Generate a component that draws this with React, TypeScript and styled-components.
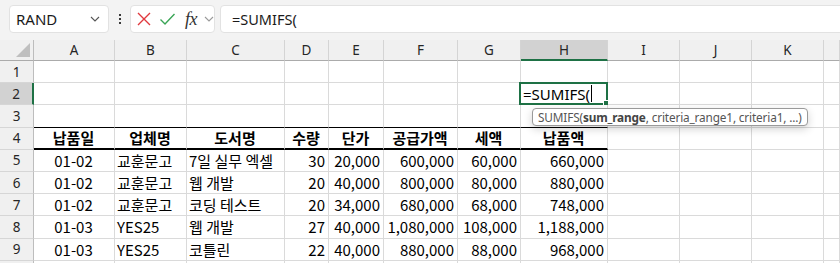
import React from "react";
import styled, { createGlobalStyle } from "styled-components";

const GREEN = "#1e7145";
const GRID = "#dadada";
const HEAD_BG = "#f0f0f0";
const SEL_BG = "#d2d2d2";

const Global = createGlobalStyle`
  html, body { margin: 0; padding: 0; background: #fff; overflow: hidden; }
  * { box-sizing: border-box; }
`;

const Page = styled.div`
  width: 840px;
  height: 263px;
  overflow: hidden;
  background: #fff;
`;

const Toolbar = styled.div`
  display: flex;
  align-items: flex-start;
  height: 40px;
  padding: 5px 0 0 9px;
  background: #f3f3f3;
`;

const Box = styled.div`
  height: 28px;
  background: #fff;
  border: 1px solid #e2e2e2;
  border-radius: 4px;
  display: flex;
  align-items: center;
`;

const NameBox = styled(Box)`
  width: 100px;
  justify-content: space-between;
  padding: 0 8px 0 6px;
  font-family: "Noto Sans", sans-serif;
  font-size: 15px;
  color: #1a1a1a;
`;

const Dots = styled.div`
  width: 21px;
  height: 28px;
  display: flex;
  flex-direction: column;
  align-items: center;
  justify-content: center;
  gap: 2px;
`;

const Dot = styled.span`
  width: 2px;
  height: 2px;
  background: #3a3a3a;
`;

const FxGroup = styled(Box)`
  width: 85px;
  padding-left: 5px;
  gap: 7px;
`;

const Fx = styled.span`
  font-family: "Liberation Serif", serif;
  font-style: italic;
  font-size: 18px;
  color: #333;
  margin-left: 2px;
  letter-spacing: -0.5px;
`;

const FormulaInput = styled(Box)`
  flex: 1;
  margin-left: 5px;
  margin-right: -10px;
  padding-left: 11px;
  font-family: "Noto Sans", sans-serif;
  font-size: 14.5px;
  color: #1a1a1a;
`;

const Sheet = styled.div`
  position: relative;
  display: grid;
  grid-template-columns: 34px 81px 72px 98px 44px 55px 74px 63px 87px 72px 72px 72px 1fr;
  grid-template-rows: 21px repeat(10, 22.2px);
`;

const Corner = styled.div`
  background: ${HEAD_BG};
  border-right: 1px solid #bdbdbd;
  border-bottom: 1px solid #ababab;
  display: flex;
  align-items: flex-end;
  justify-content: flex-end;
  padding: 0 3px 3px 0;
`;

const Triangle = styled.div`
  width: 14px;
  height: 14px;
  background: #bfbfbf;
  clip-path: polygon(100% 0, 100% 100%, 0 100%);
`;

const ColHeader = styled.div<{ $active?: boolean }>`
  background: ${(p) => (p.$active ? SEL_BG : HEAD_BG)};
  border-right: 1px solid #d4d4d4;
  border-bottom: ${(p) => (p.$active ? `2px solid ${GREEN}` : "1px solid #ababab")};
  display: flex;
  align-items: center;
  justify-content: center;
  font-family: "Noto Sans", sans-serif;
  font-size: 13.5px;
  color: #262626;
`;

const RowHeader = styled.div<{ $active?: boolean }>`
  background: ${(p) => (p.$active ? SEL_BG : HEAD_BG)};
  border-right: ${(p) => (p.$active ? `2px solid ${GREEN}` : "1px solid #bdbdbd")};
  border-bottom: 1px solid #d6d6d6;
  display: flex;
  align-items: center;
  justify-content: center;
  font-family: "Noto Sans", sans-serif;
  font-size: 13.5px;
  color: #262626;
`;

type Align = "left" | "center" | "right";
const justify: Record<Align, string> = { left: "flex-start", center: "center", right: "flex-end" };

const Cell = styled.div<{ $align?: Align; $bold?: boolean; $edge?: "thin" | "thick" }>`
  position: relative;
  border-right: 1px solid ${GRID};
  border-bottom: ${(p) =>
    p.$edge === "thick" ? "2px solid #000" : p.$edge === "thin" ? "1px solid #000" : `1px solid ${GRID}`};
  display: flex;
  align-items: center;
  justify-content: ${(p) => justify[p.$align || "left"]};
  padding: 0 3px 0 2px;
  font-family: "Noto Sans CJK KR", sans-serif;
  font-size: 15px;
  font-weight: ${(p) => (p.$bold ? 700 : 400)};
  color: #000;
  white-space: nowrap;
`;

const ActiveFrame = styled.div`
  position: absolute;
  left: -2px;
  top: -1px;
  right: -1px;
  bottom: -1px;
  border: 2px solid ${GREEN};
  pointer-events: none;
`;

const FillHandle = styled.div`
  position: absolute;
  right: -3px;
  bottom: -3px;
  width: 6px;
  height: 6px;
  background: ${GREEN};
  border: 1px solid #fff;
`;

const EditText = styled.span`
  font-family: "Noto Sans", sans-serif;
  font-size: 15px;
  display: flex;
  align-items: center;
`;

const Caret = styled.span`
  display: inline-block;
  width: 1px;
  height: 17px;
  background: #000;
  margin-left: 1px;
`;

const Tooltip = styled.div`
  position: absolute;
  left: 532px;
  top: 68px;
  width: 276px;
  height: 18px;
  background: #fff;
  border: 1px solid #9a9a9a;
  border-radius: 4px;
  box-shadow: 0 3px 8px rgba(0, 0, 0, 0.18);
  display: flex;
  align-items: center;
  padding: 0 5px;
  font-family: "Noto Sans", sans-serif;
  font-size: 11.8px;
  letter-spacing: -0.15px;
  color: #555;
  white-space: nowrap;
  b { font-weight: 700; color: #444; }
`;

const COLS = ["A", "B", "C", "D", "E", "F", "G", "H", "I", "J", "K", ""];
const ALIGN: Align[] = ["center", "left", "left", "right", "right", "right", "right", "right"];

const TABLE: string[][] = [
  ["납품일", "업체명", "도서명", "수량", "단가", "공급가액", "세액", "납품액"],
  ["01-02", "교훈문고", "7일 실무 엑셀", "30", "20,000", "600,000", "60,000", "660,000"],
  ["01-02", "교훈문고", "웹 개발", "20", "40,000", "800,000", "80,000", "880,000"],
  ["01-02", "교훈문고", "코딩 테스트", "20", "34,000", "680,000", "68,000", "748,000"],
  ["01-03", "YES25", "웹 개발", "27", "40,000", "1,080,000", "108,000", "1,188,000"],
  ["01-03", "YES25", "코틀린", "22", "40,000", "880,000", "88,000", "968,000"],
];

const XIcon = () => (
  <svg width="16" height="16" viewBox="0 0 16 16">
    <path d="M2 2 L14 14 M14 2 L2 14" stroke="#e0393e" strokeWidth="1.4" fill="none" />
  </svg>
);

const CheckIcon = () => (
  <svg width="17" height="16" viewBox="0 0 17 16">
    <path d="M1.5 8.5 L6 13 L15.5 3" stroke="#3aa556" strokeWidth="1.4" fill="none" />
  </svg>
);

const Chevron = ({ color = "#555" }: { color?: string }) => (
  <svg width="10" height="6" viewBox="0 0 10 6">
    <path d="M1 1 L5 5 L9 1" stroke={color} strokeWidth="1.1" fill="none" />
  </svg>
);

function renderCell(row: number, col: number) {
  const key = `${row}-${col}`;
  if (row === 2 && col === 7) {
    return (
      <Cell key={key}>
        <EditText>
          =SUMIFS(
          <Caret />
        </EditText>
        <ActiveFrame>
          <FillHandle />
        </ActiveFrame>
      </Cell>
    );
  }
  const inTable = col < 8;
  const edge = inTable && row === 3 ? "thin" : inTable && row === 4 ? "thick" : undefined;
  const data = row >= 4 && row <= 9 && inTable ? TABLE[row - 4][col] : "";
  const align: Align = row === 4 ? "center" : ALIGN[col] || "left";
  return (
    <Cell key={key} $edge={edge} $align={align} $bold={row === 4}>
      {data}
    </Cell>
  );
}

export default function App() {
  const rows = Array.from({ length: 10 }, (_, i) => i + 1);
  return (
    <Page>
      <Global />
      <Toolbar>
        <NameBox>
          <span>RAND</span>
          <Chevron />
        </NameBox>
        <Dots>
          <Dot />
          <Dot />
          <Dot />
        </Dots>
        <FxGroup>
          <XIcon />
          <CheckIcon />
          <Fx>fx</Fx>
          <Chevron color="#9a9a9a" />
        </FxGroup>
        <FormulaInput>=SUMIFS(</FormulaInput>
      </Toolbar>
      <Sheet>
        <Corner>
          <Triangle />
        </Corner>
        {COLS.map((c, i) => (
          <ColHeader key={`h${i}`} $active={c === "H"}>
            {c}
          </ColHeader>
        ))}
        {rows.map((r) => (
          <React.Fragment key={`r${r}`}>
            <RowHeader $active={r === 2}>{r < 10 ? r : ""}</RowHeader>
            {COLS.map((_, ci) => renderCell(r, ci))}
          </React.Fragment>
        ))}
        <Tooltip>
          SUMIFS(<b>sum_range</b>, criteria_range1, criteria1, ...)
        </Tooltip>
      </Sheet>
    </Page>
  );
}
